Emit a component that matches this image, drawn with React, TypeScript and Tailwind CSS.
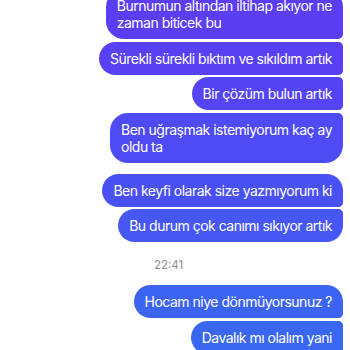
import React from "react";

type Msg = { lines: string[]; color: string; corners: string };

const first: Msg[] = [
  { lines: ["Burnumun altından iltihap akıyor ne", "zaman biticek bu"], color: "bg-[#5b3df2]", corners: "rounded-l-[18px] rounded-tr-[18px] rounded-br-[5px]" },
  { lines: ["Sürekli sürekli bıktım ve sıkıldım artık"], color: "bg-[#5841f3]", corners: "rounded-l-[18px] rounded-r-[5px]" },
  { lines: ["Bir çözüm bulun artık"], color: "bg-[#5444f3]", corners: "rounded-l-[18px] rounded-r-[5px]" },
  { lines: ["Ben uğraşmak istemiyorum kaç ay", "oldu ta"], color: "bg-[#4f4bf4]", corners: "rounded-l-[18px] rounded-tr-[5px] rounded-br-[18px]" },
];

const second: Msg[] = [
  { lines: ["Ben keyfi olarak size yazmıyorum ki"], color: "bg-[#4a51f4]", corners: "rounded-l-[18px] rounded-tr-[18px] rounded-br-[5px]" },
  { lines: ["Bu durum çok canımı sıkıyor artık"], color: "bg-[#4657f4]", corners: "rounded-l-[18px] rounded-tr-[5px] rounded-br-[18px]" },
];

const last: Msg[] = [
  { lines: ["Hocam niye dönmüyorsunuz ?"], color: "bg-[#3d63f1]", corners: "rounded-l-[18px] rounded-tr-[18px] rounded-br-[5px]" },
  { lines: ["Davalık mı olalım yani"], color: "bg-[#3a67f0]", corners: "rounded-l-[18px] rounded-r-[5px]" },
];

function Bubble({ m }: { m: Msg }) {
  return (
    <div className={`${m.color} ${m.corners} whitespace-nowrap px-[11px] py-2 text-[14px] leading-[17px] tracking-[-0.5px] text-white`}>
      {m.lines.map((l, i) => (
        <div key={i}>{l}</div>
      ))}
    </div>
  );
}

function Group({ items }: { items: Msg[] }) {
  return (
    <div className="flex flex-col items-end gap-[2.5px]">
      {items.map((m, j) => (
        <Bubble key={j} m={m} />
      ))}
    </div>
  );
}

export default function App() {
  return (
    <div className="h-[350px] w-[350px] overflow-hidden bg-white" style={{ fontFamily: "Inter, 'Noto Sans', sans-serif" }}>
      <div className="mt-[-11px] flex flex-col pr-[7px]">
        <div className="mb-[11px]">
          <Group items={first} />
        </div>
        <Group items={second} />
        <div className="flex justify-center pt-[16px] pb-[13px] text-[11.5px] leading-[14px] text-[#8e8e93]">
          <span className="mr-[6px]">22:41</span>
        </div>
        <Group items={last} />
      </div>
    </div>
  );
}
